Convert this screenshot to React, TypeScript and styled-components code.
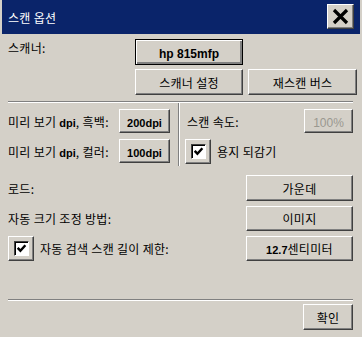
import styled, { createGlobalStyle, css } from "styled-components";

const GlobalStyle = createGlobalStyle`
  html, body { margin: 0; padding: 0; background: #d4d0c8; }
  body { font-family: "Noto Sans CJK KR", "Liberation Sans", sans-serif; font-size: 12px; color: #000; }
`;

const Dialog = styled.div`
  width: 362px;
  height: 337px;
  box-sizing: border-box;
  background: #d4d0c8;
  padding: 0 2px 2px;
  display: flex;
  flex-direction: column;
`;

const TitleBar = styled.div`
  height: 34px;
  background: #0a246a;
  display: flex;
  align-items: center;
  justify-content: space-between;
  padding: 0 6px 0 6px;
  color: #fff;
  font-size: 12px;
  letter-spacing: 0.3px;
`;

const CloseButton = styled.button`
  width: 27px;
  height: 25px;
  padding: 0;
  margin-top: -1px;
  background: #d4d0c8;
  border: 1px solid;
  border-color: #fff #404040 #404040 #fff;
  box-shadow: inset -1px -1px 0 #808080;
  display: flex;
  align-items: center;
  justify-content: center;
`;

const Body = styled.div`
  flex: 1;
  display: flex;
  flex-direction: column;
  padding: 5px 7px 0 6px;
`;

const raised = css`
  background: #d4d0c8;
  border: 1px solid;
  border-color: #fff #404040 #404040 #fff;
  box-shadow: inset -1px -1px 0 #808080;
`;

const Button = styled.button<{ $w: number; $h?: number; $default?: boolean; $disabled?: boolean }>`
  ${raised};
  width: ${({ $w }) => $w}px;
  height: ${({ $h }) => $h ?? 24}px;
  padding: 0;
  flex-shrink: 0;
  font-family: "Noto Sans CJK KR", "Liberation Sans", sans-serif;
  font-size: 12px;
  letter-spacing: 0.3px;
  color: ${({ $disabled }) => ($disabled ? "#9a9890" : "#000")};
  ${({ $default }) =>
    $default &&
    css`
      border: 1px solid #000;
      box-shadow: inset 1px 1px 0 #fff, inset -2px -2px 0 #808080;
    `}
`;

const Latin = styled.span<{ $bold?: boolean; $size?: number }>`
  font-family: "Liberation Sans", Arial, sans-serif;
  font-size: ${({ $size }) => $size ?? 11}px;
  letter-spacing: 0;
  font-weight: ${({ $bold }) => ($bold === false ? "normal" : "bold")};
`;

const Label = styled.span`
  white-space: nowrap;
  letter-spacing: 0.3px;
`;

const TopGrid = styled.div`
  display: grid;
  grid-template-columns: 122px 108px 109px;
  column-gap: 5px;
  row-gap: 4px;
  align-items: start;
`;

const TopLabel = styled(Label)`
  line-height: 18px;
`;

const HSep = styled.div<{ $top: number }>`
  margin-top: ${({ $top }) => $top}px;
  border-top: 1px solid #808080;
  border-bottom: 1px solid #fff;
`;

const Middle = styled.div`
  display: flex;
  height: 63px;
`;

const LeftCol = styled.div`
  width: 170px;
  box-sizing: border-box;
  display: flex;
  flex-direction: column;
  gap: 6px;
  padding: 6px 8px 0 0;
`;

const VSep = styled.div`
  width: 0;
  border-left: 1px solid #808080;
  border-right: 1px solid #fff;
`;

const RightCol = styled.div`
  flex: 1;
  display: flex;
  flex-direction: column;
  gap: 6px;
  padding-top: 6px;
`;

const Row = styled.div<{ $pl?: number }>`
  display: flex;
  align-items: center;
  justify-content: space-between;
  padding-left: ${({ $pl }) => $pl ?? 0}px;
`;

const CheckRow = styled.div<{ $pl?: number }>`
  display: flex;
  align-items: center;
  gap: 6px;
  padding-left: ${({ $pl }) => $pl ?? 0}px;
`;

const CheckFrame = styled.div`
  ${raised};
  width: 26px;
  height: 25px;
  box-sizing: border-box;
  display: flex;
  align-items: center;
  justify-content: center;
`;

const CheckBox = styled.div`
  width: 15px;
  height: 15px;
  box-sizing: border-box;
  background: #fff;
  border: 1px solid;
  border-color: #404040 #fff #fff #404040;
  box-shadow: inset 1px 1px 0 #000;
  display: flex;
  align-items: center;
  justify-content: center;
`;

const Options = styled.div`
  margin-top: 9px;
  display: grid;
  grid-template-columns: 1fr 107px;
  row-gap: 5px;
  align-items: center;
`;

const Footer = styled.div`
  display: flex;
  justify-content: flex-end;
  padding-top: 3px;
`;

const Check = () => (
  <CheckFrame>
    <CheckBox>
      <svg width="11" height="11" viewBox="0 0 10 10">
        <path d="M1.5 4.5 L4 7 L8.5 2" stroke="#000" strokeWidth="2.2" fill="none" />
      </svg>
    </CheckBox>
  </CheckFrame>
);

export default function App() {
  return (
    <>
      <GlobalStyle />
      <Dialog>
        <TitleBar>
          <span>스캔 옵션</span>
          <CloseButton aria-label="닫기">
            <svg width="17" height="17" viewBox="0 0 17 17">
              <path d="M2 2 L15 15 M15 2 L2 15" stroke="#000" strokeWidth="3.2" />
            </svg>
          </CloseButton>
        </TitleBar>
        <Body>
          <TopGrid>
            <TopLabel>스캐너:</TopLabel>
            <Button $w={108} $h={26} $default>
              <Latin $size={12}>hp 815mfp</Latin>
            </Button>
            <span />
            <span />
            <Button $w={108} $h={26}>스캐너 설정</Button>
            <Button $w={109} $h={26}>재스캔 버스</Button>
          </TopGrid>
          <HSep $top={6} />
          <Middle>
            <LeftCol>
              <Row>
                <Label>
                  미리 보기 <Latin>dpi</Latin>, 흑백:
                </Label>
                <Button $w={51}>
                  <Latin>200dpi</Latin>
                </Button>
              </Row>
              <Row>
                <Label>
                  미리 보기 <Latin>dpi</Latin>, 컬러:
                </Label>
                <Button $w={51}>
                  <Latin>100dpi</Latin>
                </Button>
              </Row>
            </LeftCol>
            <VSep />
            <RightCol>
              <Row $pl={7}>
                <Label>스캔 속도:</Label>
                <Button $w={49} $disabled>
                  <Latin $bold={false} $size={12}>100%</Latin>
                </Button>
              </Row>
              <CheckRow $pl={5}>
                <Check />
                <Label>용지 되감기</Label>
              </CheckRow>
            </RightCol>
          </Middle>
          <Options>
            <Label>로드:</Label>
            <Button $w={107} $h={26}>가운데</Button>
            <Label>자동 크기 조정 방법:</Label>
            <Button $w={107} $h={25}>이미지</Button>
            <CheckRow>
              <Check />
              <Label>자동 검색 스캔 길이 제한:</Label>
            </CheckRow>
            <Button $w={107} $h={25}>
              <Latin>12.7</Latin>센티미터
            </Button>
          </Options>
          <HSep $top={38} />
          <Footer>
            <Button $w={50} $h={26}>확인</Button>
          </Footer>
        </Body>
      </Dialog>
    </>
  );
}
